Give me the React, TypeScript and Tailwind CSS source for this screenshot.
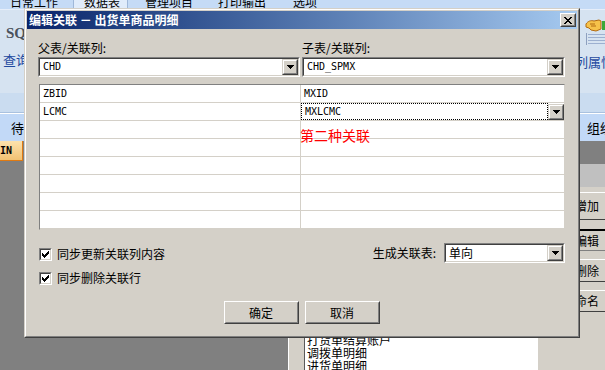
import React from 'react';

const cjk = "font-['Noto_Sans_CJK_SC',sans-serif]";
const mono = "font-['DejaVu_Sans_Mono',monospace] text-[10px]";

// 经典 Win2000 下拉按钮
function DropButton() {
  return (
    <div className="w-[16px] h-[16px] shrink-0 bg-[#d4d0c8] border border-t-[#d4d0c8] border-l-[#d4d0c8] border-r-[#404040] border-b-[#404040]">
      <div className="w-full h-full border border-t-white border-l-white border-r-[#808080] border-b-[#808080] flex items-center justify-center">
        <svg width="7" height="4" viewBox="0 0 7 4" shapeRendering="crispEdges">
          <rect x="0" y="0" width="7" height="1" fill="#000" />
          <rect x="1" y="1" width="5" height="1" fill="#000" />
          <rect x="2" y="2" width="3" height="1" fill="#000" />
          <rect x="3" y="3" width="1" height="1" fill="#000" />
        </svg>
      </div>
    </div>
  );
}

function Combo({ value, textClass, className = '' }: { value: string; textClass: string; className?: string }) {
  return (
    <div className={`h-[20px] border border-t-[#808080] border-l-[#808080] border-r-white border-b-white ${className}`}>
      <div className="h-full border border-t-[#404040] border-l-[#404040] border-r-[#d4d0c8] border-b-[#d4d0c8] bg-white flex items-center">
        <span className={`flex-1 pl-[3px] leading-[14px] ${textClass}`}>{value}</span>
        <DropButton />
      </div>
    </div>
  );
}

function Check() {
  return (
    <div className="w-[13px] h-[13px] shrink-0 border border-t-[#808080] border-l-[#808080] border-r-white border-b-white">
      <div className="w-full h-full border border-t-[#404040] border-l-[#404040] border-r-[#d4d0c8] border-b-[#d4d0c8] bg-white flex items-center justify-center">
        <svg width="7" height="7" viewBox="0 0 7 7" shapeRendering="crispEdges" fill="#000">
          <rect x="6" y="0" width="1" height="1" />
          <rect x="5" y="1" width="2" height="1" />
          <rect x="0" y="2" width="1" height="1" />
          <rect x="4" y="2" width="3" height="1" />
          <rect x="0" y="3" width="2" height="1" />
          <rect x="3" y="3" width="3" height="1" />
          <rect x="0" y="4" width="5" height="1" />
          <rect x="1" y="5" width="3" height="1" />
          <rect x="2" y="6" width="1" height="1" />
        </svg>
      </div>
    </div>
  );
}

function Btn({ children }: { children: React.ReactNode }) {
  return (
    <div className="w-[75px] h-[23px] border border-t-white border-l-white border-r-[#404040] border-b-[#404040]">
      <div className="w-full h-full border border-t-[#d4d0c8] border-l-[#d4d0c8] border-r-[#808080] border-b-[#808080] flex items-center justify-center text-[12px] leading-[14px]">
        {children}
      </div>
    </div>
  );
}

const rows: [string, string][] = [
  ['ZBID', 'MXID'],
  ['LCMC', 'MXLCMC'],
  ['', ''],
  ['', ''],
  ['', ''],
  ['', ''],
  ['', ''],
  ['', ''],
];

function Dialog() {
  return (
    <div className="absolute left-[24px] top-[8px] w-[556px] h-[330px] bg-[#d4d0c8] border border-t-[#d4d0c8] border-l-[#d4d0c8] border-r-[#404040] border-b-[#404040]">
      <div className="h-full border border-t-white border-l-white border-r-[#808080] border-b-[#808080] p-px flex flex-col">
        {/* 标题栏 */}
        <div className="h-[18px] shrink-0 flex items-center justify-between pl-[2px] pr-[1px] bg-linear-to-r from-[#0a246a] to-[#a6caf0]">
          <span className="text-white font-bold text-[12px] leading-[14px]">编辑关联 － 出货单商品明细</span>
          <div className="w-[16px] h-[14px] bg-[#d4d0c8] border border-t-white border-l-white border-r-[#404040] border-b-[#404040]">
            <div className="w-full h-full border border-t-[#d4d0c8] border-l-[#d4d0c8] border-r-[#808080] border-b-[#808080] flex items-center justify-center">
              <svg width="8" height="7" viewBox="0 0 8 7" shapeRendering="crispEdges" fill="#000">
                <rect x="0" y="0" width="2" height="1" />
                <rect x="6" y="0" width="2" height="1" />
                <rect x="1" y="1" width="2" height="1" />
                <rect x="5" y="1" width="2" height="1" />
                <rect x="2" y="2" width="4" height="1" />
                <rect x="3" y="3" width="2" height="1" />
                <rect x="2" y="4" width="4" height="1" />
                <rect x="1" y="5" width="2" height="1" />
                <rect x="5" y="5" width="2" height="1" />
                <rect x="0" y="6" width="2" height="1" />
                <rect x="6" y="6" width="2" height="1" />
              </svg>
            </div>
          </div>
        </div>

        <div className="flex-1 flex flex-col pl-[11px] pr-[12px] pt-[12px] text-[12px]">
          <div className="grid grid-cols-[262px_263px] gap-x-[2px]">
            <div>
              <div className="h-[14px] leading-[14px] mb-[2px]">父表/关联列:</div>
              <Combo value="CHD" textClass={mono} />
            </div>
            <div>
              <div className="h-[14px] leading-[14px] mb-[2px]">子表/关联列:</div>
              <Combo value="CHD_SPMX" textClass={mono} />
            </div>
          </div>

          {/* 关联列表格 */}
          <div className="relative mt-[7px] ml-px w-[526px] bg-white border border-t-[#808080] border-l-[#808080] border-r-[#d4d0c8] border-b-[#d4d0c8]">
            {rows.map(([a, b], i) => (
              <div key={i} className="grid grid-cols-[261px_1fr] h-[18px] border-b border-[#d4d0c8] last:border-b-0">
                <div className={`border-r border-[#d4d0c8] pl-[3px] flex items-center ${mono}`}>{a}</div>
                {i === 1 ? (
                  <div className="flex items-center">
                    <div className={`flex-1 h-full border border-dotted border-black pl-[3px] flex items-center ${mono}`}>{b}</div>
                    <DropButton />
                  </div>
                ) : (
                  <div className={`pl-[3px] flex items-center ${mono}`}>{b}</div>
                )}
              </div>
            ))}
            <span className="absolute left-[260px] top-[43px] text-[14px] leading-[14px] text-[#ff0000]">第二种关联</span>
          </div>

          <div className="mt-[13px] h-[20px] flex justify-between">
            <div className="flex items-start pl-px">
              <div className="mt-[5px]"><Check /></div>
              <span className="ml-[5px] mt-[4px] leading-[14px]">同步更新关联列内容</span>
            </div>
            <div className="flex items-center">
              <span className="leading-[14px] mr-[8px]">生成关联表:</span>
              <Combo value="单向" textClass="text-[12px]" className="w-[121px]" />
            </div>
          </div>
          <div className="mt-[8px] flex items-center pl-px">
            <Check />
            <span className="ml-[5px] leading-[14px]">同步删除关联行</span>
          </div>

          <div className="mt-[16px] flex justify-center gap-[6px]">
            <Btn>确定</Btn>
            <Btn>取消</Btn>
          </div>
        </div>
      </div>
    </div>
  );
}

function Tabs() {
  const tab = 'text-[12px] leading-[12px] -mt-[4px]';
  return (
    <div className="h-[10px] shrink-0 flex bg-[#c5dbf6] border-b border-[#e6eefa] overflow-hidden">
      <div className="w-[73px] pl-[10px]"><div className={tab}>日常工作</div></div>
      <div className="w-[55px] pl-[10px] bg-[#e0ecfb] border-x border-[#9fb8d9]"><div className={tab}>数据表</div></div>
      <div className="w-[77px] pl-[17px]"><div className={tab}>管理项目</div></div>
      <div className="w-[75px] pl-[13px]"><div className={tab}>打印输出</div></div>
      <div className="flex-1 pl-[13px]"><div className={tab}>选项</div></div>
    </div>
  );
}

export default function App() {
  return (
    <div className={`relative w-[605px] h-[370px] overflow-hidden bg-[#808080] text-black ${cjk}`}>
      {/* 后面的主窗口 */}
      <div className="flex flex-col h-full">
        <Tabs />
        <div className="h-[83px] shrink-0 bg-[#d6e3f1] flex justify-between">
          <div className="flex flex-col pl-[6px] pt-[15px]">
            <span className="font-['Liberation_Serif',serif] font-bold text-[15px] leading-[16px] text-[#4a525c]">SQL</span>
            <span className="mt-[11px] -ml-[3px] text-[13px] leading-[16px] text-[#1f4aa0]">查询</span>
          </div>
          <div className="w-[45px] flex flex-col">
            <svg className="ml-[25px] mt-[8px]" width="20" height="28" viewBox="0 0 20 28">
              <path d="M1 6 C3 3 6 2 9 3 L14 2 L16 3 L16 11 L11 13 L6 12 L4 10 L1 9 Z" fill="#f6c24a" stroke="#b26a10" strokeWidth="1" />
              <path d="M5 6 L10 6 M6 8 L11 8" stroke="#b26a10" strokeWidth="1" />
              <rect x="17" y="3" width="3" height="9" fill="#3aa83a" />
              <rect x="1" y="15" width="1" height="12" fill="#8ea0bf" />
              <rect x="3" y="16" width="17" height="1" fill="#9db0d0" />
              <rect x="3" y="19" width="17" height="1" fill="#9db0d0" />
              <rect x="3" y="22" width="17" height="1" fill="#9db0d0" />
              <rect x="3" y="25" width="17" height="1" fill="#9db0d0" />
            </svg>
            <span className="ml-[15px] mt-[8px] text-[13px] leading-[16px] text-[#1f4aa0] whitespace-nowrap">列属性</span>
          </div>
        </div>
        <div className="h-[19px] shrink-0 bg-[#cadcf0]" />
        <div className="h-[2px] shrink-0 bg-[#a9c1df] border-b border-white" />
        <div className="h-[27px] shrink-0 bg-[#c2d9f7] flex items-center justify-between text-[13px] leading-[16px]">
          <span className="pl-[11px]">待处理</span>
          <span className="w-[45px] pl-[27px] whitespace-nowrap">组织</span>
        </div>
        <div className="flex-1 flex">
          <div className="w-[288px] bg-[#808080]">
            <div className="w-[23px] h-[20px] bg-linear-to-b from-[#fce2ad] to-[#f2c272] border-r border-b border-[#e07a12] flex items-center">
              <span className="font-['DejaVu_Sans_Mono',monospace] font-bold text-[10px] leading-[12px]">IN</span>
            </div>
          </div>
          <div className="w-[272px] bg-[#d4d0c8] border-l border-white flex flex-col justify-end">
            <div className="ml-[15px] w-[234px] h-[170px] -mb-[2px] bg-white border-l border-t border-[#5a5a5a] flex flex-col justify-end pl-[2px] text-[12px] leading-[13px] overflow-hidden">
              <span>出货单明细</span>
              <span>出货单商品明细</span>
              <span>打货单结算账户</span>
              <span>调拨单明细</span>
              <span>进货单明细</span>
            </div>
          </div>
          <div className="flex-1 flex flex-col bg-[#d4d0c8] text-[12px] leading-[14px]">
            <div className="h-[23px] bg-[#808080]" />
            <div className="h-[23px] bg-[#c0c0c0]" />
            <div className="mt-[5px] h-[28px] border-t border-white border-b border-b-[#404040] pl-[15px] flex items-center whitespace-nowrap">增加</div>
            <div className="mt-[9px] h-[22px] border-t-2 border-black border-b border-b-[#808080] pl-[15px] flex items-center whitespace-nowrap">编辑</div>
            <div className="mt-[8px] h-[23px] border-t border-white border-b border-b-[#404040] pl-[15px] flex items-center whitespace-nowrap">删除</div>
            <div className="mt-[8px] h-[22px] border-t border-white border-b border-b-[#404040] pl-[15px] flex items-center whitespace-nowrap">命名</div>
          </div>
        </div>
      </div>

      <Dialog />
    </div>
  );
}
